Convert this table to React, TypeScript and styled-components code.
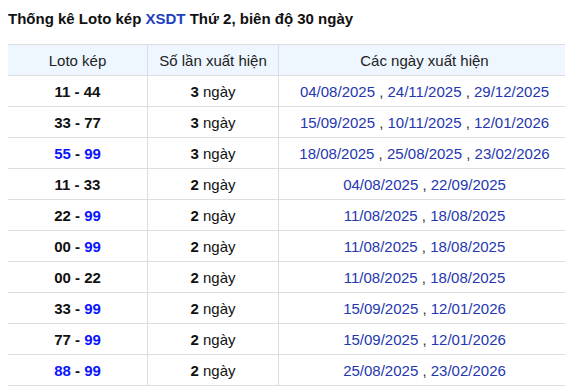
import React from "react";
import styled, { createGlobalStyle } from "styled-components";

const GlobalStyle = createGlobalStyle`
  body {
    margin: 8px;
    background: #fff;
    font-family: "Liberation Sans", Arial, sans-serif;
    font-size: 15px;
    color: #222;
  }
`;

type Row = {
  a: string;
  b: string;
  aBlue?: boolean;
  bBlue?: boolean;
  count: number;
  dates: string[];
};

const rows: Row[] = [
  { a: "11", b: "44", count: 3, dates: ["04/08/2025", "24/11/2025", "29/12/2025"] },
  { a: "33", b: "77", count: 3, dates: ["15/09/2025", "10/11/2025", "12/01/2026"] },
  { a: "55", b: "99", aBlue: true, bBlue: true, count: 3, dates: ["18/08/2025", "25/08/2025", "23/02/2026"] },
  { a: "11", b: "33", count: 2, dates: ["04/08/2025", "22/09/2025"] },
  { a: "22", b: "99", bBlue: true, count: 2, dates: ["11/08/2025", "18/08/2025"] },
  { a: "00", b: "99", bBlue: true, count: 2, dates: ["11/08/2025", "18/08/2025"] },
  { a: "00", b: "22", count: 2, dates: ["11/08/2025", "18/08/2025"] },
  { a: "33", b: "99", bBlue: true, count: 2, dates: ["15/09/2025", "12/01/2026"] },
  { a: "77", b: "99", bBlue: true, count: 2, dates: ["15/09/2025", "12/01/2026"] },
  { a: "88", b: "99", aBlue: true, bBlue: true, count: 2, dates: ["25/08/2025", "23/02/2026"] },
];

const Title = styled.h3`
  margin: 0;
  padding: 2px 0 0 0;
  height: 34px;
  font-size: 15px;
  font-weight: bold;
  color: #111;
`;

const Brand = styled.span`
  color: #1f3fbf;
`;

const Table = styled.table`
  width: 560px;
  margin-left: -1px;
  border-collapse: collapse;
  table-layout: fixed;
`;

const HeadCell = styled.th<{ $w: number }>`
  width: ${(p) => p.$w}px;
  height: 30px;
  padding: 0;
  background: #eef6ff;
  border: 1px solid #dddddd;
  font-weight: normal;
  color: #222;
  text-align: center;
`;

const Cell = styled.td`
  height: 30px;
  padding: 0;
  border: 1px solid #dddddd;
  text-align: center;
  color: #111;
`;

const Num = styled.b<{ $blue?: boolean }>`
  color: ${(p) => (p.$blue ? "#0a14ff" : "#111")};
`;

const DateText = styled.span`
  color: #2437b0;
`;

const Sep = styled.span`
  color: #333;
`;

export default function App() {
  return (
    <>
      <GlobalStyle />
      <Title>
        Thống kê Loto kép <Brand>XSDT</Brand> Thứ 2, biên độ 30 ngày
      </Title>
      <Table>
        <thead>
          <tr>
            <HeadCell $w={139}>Loto kép</HeadCell>
            <HeadCell $w={130}>Số lần xuất hiện</HeadCell>
            <HeadCell $w={291}>Các ngày xuất hiện</HeadCell>
          </tr>
        </thead>
        <tbody>
          {rows.map((r, i) => (
            <tr key={i}>
              <Cell>
                <Num $blue={r.aBlue}>{r.a}</Num> <Num>-</Num> <Num $blue={r.bBlue}>{r.b}</Num>
              </Cell>
              <Cell>
                <b>{r.count}</b> ngày
              </Cell>
              <Cell>
                {r.dates.map((d, j) => (
                  <React.Fragment key={j}>
                    {j > 0 && <Sep> , </Sep>}
                    <DateText>{d}</DateText>
                  </React.Fragment>
                ))}
              </Cell>
            </tr>
          ))}
        </tbody>
      </Table>
    </>
  );
}
